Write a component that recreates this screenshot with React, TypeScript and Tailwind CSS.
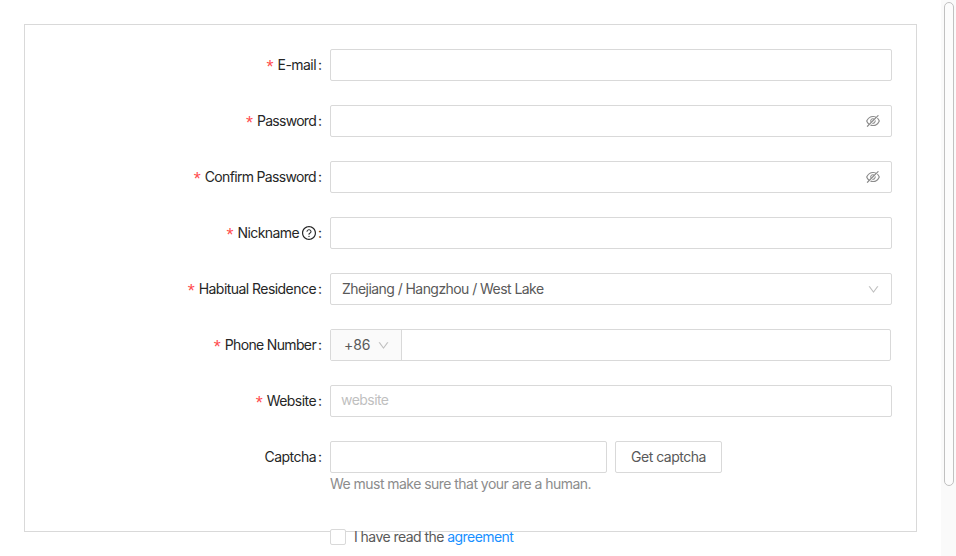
import type { ReactNode } from "react";
import {
  AiOutlineDown,
  AiOutlineEyeInvisible,
  AiOutlineQuestionCircle,
} from "react-icons/ai";

type RowProps = {
  label: string;
  tracking: string;
  required?: boolean;
  help?: boolean;
  children: ReactNode;
};

function Row({ label, tracking, required = true, help, children }: RowProps) {
  return (
    <div className="flex h-8 items-center">
      <div className="flex h-8 w-[305px] shrink-0 items-center justify-end pr-2 text-[#262626]">
        {required && (
          <span className="mr-1 pt-[3px] font-['Liberation_Sans',sans-serif] text-[18px] leading-none text-[#ff4d4f]">
            *
          </span>
        )}
        <span className={tracking}>{label}</span>
        {help && <AiOutlineQuestionCircle className="ml-[2px] size-4" />}
        <span className={help ? "ml-px w-[4px]" : "ml-[2px] w-[4px]"}>:</span>
      </div>
      {children}
    </div>
  );
}

const field =
  "flex h-8 w-[562px] items-center rounded-[2px] border border-[#d9d9d9] bg-white text-[#595959]";

export default function App() {
  return (
    <div className="flex h-[556px] w-[956px] overflow-hidden bg-white font-['Inter','Liberation_Sans',sans-serif] text-sm leading-[22px]">
      <div className="w-[941px] shrink-0 pl-6 pt-6">
        <div className="flex h-[508px] w-[893px] flex-col gap-6 border border-[#d9d9d9] pt-6">
          <Row label="E-mail" tracking="tracking-[-0.55px]">
            <div className={field} />
          </Row>
          <Row label="Password" tracking="tracking-[-0.72px]">
            <div className={`${field} justify-end pr-[10px]`}>
              <AiOutlineEyeInvisible className="size-4 text-[#8c8c8c]" />
            </div>
          </Row>
          <Row label="Confirm Password" tracking="tracking-[-0.67px]">
            <div className={`${field} justify-end pr-[10px]`}>
              <AiOutlineEyeInvisible className="size-4 text-[#8c8c8c]" />
            </div>
          </Row>
          <Row label="Nickname" tracking="tracking-[-0.6px]" help>
            <div className={field} />
          </Row>
          <Row label="Habitual Residence" tracking="tracking-[-0.55px]">
            <div className={`${field} justify-between pl-[11px] pr-[11px]`}>
              <span className="tracking-[-0.56px]">Zhejiang / Hangzhou / West Lake</span>
              <AiOutlineDown className="size-[13px] text-[#bfbfbf]" />
            </div>
          </Row>
          <Row label="Phone Number" tracking="tracking-[-0.65px]">
            <div className="flex h-8 w-[561px] rounded-[2px] border border-[#d9d9d9] text-[#595959]">
              <div className="flex w-[71px] items-center border-r border-[#d9d9d9] bg-[#fafafa] pl-[13px]">
                <span className="w-[33px] tracking-[-0.1px]">+86</span>
                <AiOutlineDown className="size-[13px] text-[#bfbfbf]" />
              </div>
            </div>
          </Row>
          <Row label="Website" tracking="tracking-[-0.55px]">
            <div className={`${field} pb-[2px] pl-[10px]`}>
              <span className="tracking-[-0.55px] text-[#bfbfbf]">website</span>
            </div>
          </Row>
          <div className="flex h-[56px] flex-col">
            <Row label="Captcha" tracking="tracking-[-0.55px]" required={false}>
              <div className="flex gap-2">
                <div className="h-8 w-[277px] rounded-[2px] border border-[#d9d9d9]" />
                <div className="flex h-8 w-[107px] items-center justify-center rounded-[2px] border border-[#d9d9d9] tracking-[-0.5px] text-[#595959]">
                  Get captcha
                </div>
              </div>
            </Row>
            <div className="ml-[305px] tracking-[-0.54px] text-[#8c8c8c]">
              We must make sure that your are a human.
            </div>
          </div>
          <div className="ml-[305px] mt-[2px] flex h-8 shrink-0 items-center text-[#595959]">
            <span className="mb-px mr-2 size-4 rounded-[2px] border border-[#d9d9d9] bg-white" />
            <span className="tracking-[-0.55px]">
              I have read the <a className="text-[#1890ff]">agreement</a>
            </span>
          </div>
        </div>
      </div>
      <div className="h-full w-[15px] bg-[#fafafa] pl-[3px] pt-[2px]">
        <div className="h-[484px] w-[10px] rounded-full border border-[#c1c1c1] bg-[#fcfcfc]" />
      </div>
    </div>
  );
}
